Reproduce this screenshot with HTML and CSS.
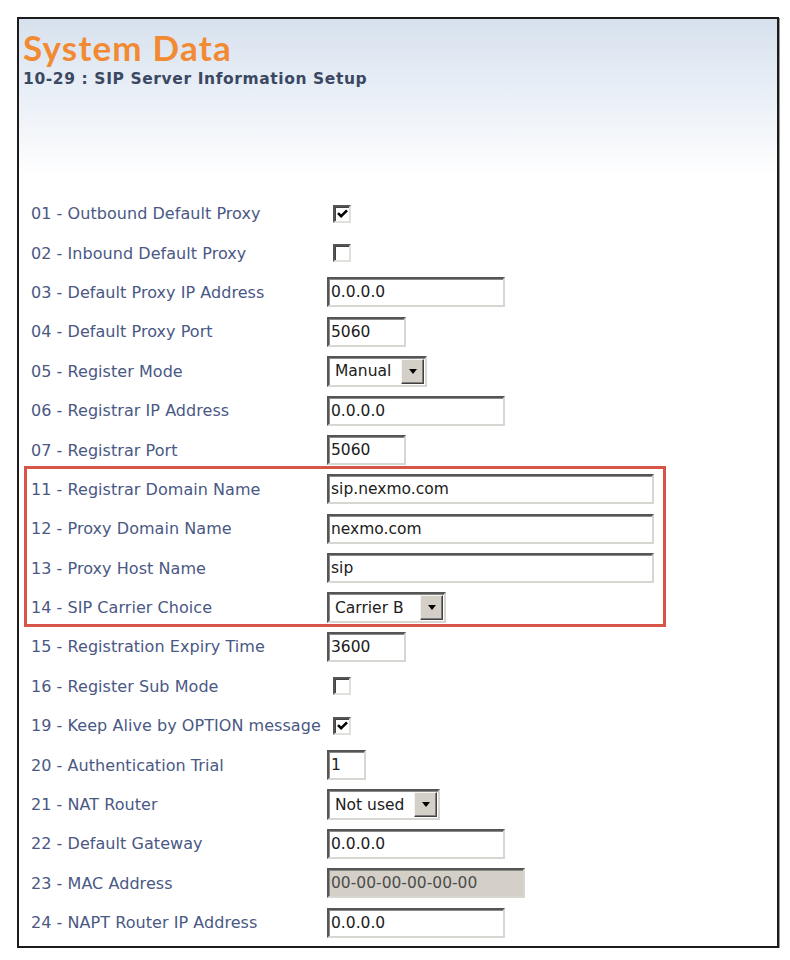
FILE: index.html
```html
<!DOCTYPE html>
<html>
<head>
<meta charset="utf-8">
<link rel="stylesheet" href="styles.css">
</head>
<body>
<div class="frame">
  <div class="header">
    <h1 class="title">System Data</h1>
    <h2 class="subtitle">10-29 : SIP Server Information Setup</h2>
  </div>
  <div class="form">
    <div class="row"><span class="label">01 - Outbound Default Proxy</span><span class="cb"><svg viewBox="0 0 12 10" class="tick"><path d="M1 4.5 L4.5 8 L11 1.5" fill="none" stroke="#000" stroke-width="2.8"/></svg></span></div>
    <div class="row"><span class="label">02 - Inbound Default Proxy</span><span class="cb"></span></div>
    <div class="row"><span class="label">03 - Default Proxy IP Address</span><span class="field w-ip">0.0.0.0</span></div>
    <div class="row"><span class="label">04 - Default Proxy Port</span><span class="field w-port">5060</span></div>
    <div class="row"><span class="label">05 - Register Mode</span><span class="select w-manual"><span class="sel-text">Manual</span><span class="sel-btn"><span class="arrow"></span></span></span></div>
    <div class="row"><span class="label">06 - Registrar IP Address</span><span class="field w-ip">0.0.0.0</span></div>
    <div class="row"><span class="label">07 - Registrar Port</span><span class="field w-port">5060</span></div>
    <div class="group">
      <div class="row"><span class="label">11 - Registrar Domain Name</span><span class="field w-domain">sip.nexmo.com</span></div>
      <div class="row"><span class="label">12 - Proxy Domain Name</span><span class="field w-domain">nexmo.com</span></div>
      <div class="row"><span class="label">13 - Proxy Host Name</span><span class="field w-domain">sip</span></div>
      <div class="row"><span class="label">14 - SIP Carrier Choice</span><span class="select w-carrier"><span class="sel-text">Carrier B</span><span class="sel-btn"><span class="arrow"></span></span></span></div>
    </div>
    <div class="row"><span class="label">15 - Registration Expiry Time</span><span class="field w-port">3600</span></div>
    <div class="row"><span class="label">16 - Register Sub Mode</span><span class="cb"></span></div>
    <div class="row"><span class="label">19 - Keep Alive by OPTION message</span><span class="cb"><svg viewBox="0 0 12 10" class="tick"><path d="M1 4.5 L4.5 8 L11 1.5" fill="none" stroke="#000" stroke-width="2.8"/></svg></span></div>
    <div class="row"><span class="label">20 - Authentication Trial</span><span class="field w-trial">1</span></div>
    <div class="row"><span class="label">21 - NAT Router</span><span class="select w-nat"><span class="sel-text">Not used</span><span class="sel-btn"><span class="arrow"></span></span></span></div>
    <div class="row"><span class="label">22 - Default Gateway</span><span class="field w-ip">0.0.0.0</span></div>
    <div class="row"><span class="label">23 - MAC Address</span><span class="field w-mac disabled">00-00-00-00-00-00</span></div>
    <div class="row"><span class="label">24 - NAPT Router IP Address</span><span class="field w-ip">0.0.0.0</span></div>
  </div>
</div>
</body>
</html>
```
FILE: styles.css
```css
html, body {
  margin: 0;
  padding: 0;
  background: #ffffff;
}
.frame {
  margin: 17px 0 0 17px;
  width: 758px;
  height: 927px;
  border: 2px solid #1c1c1c;
  box-shadow: 1px 1px 0 #9a9a9a;
  background: #ffffff;
  font-family: "DejaVu Sans", sans-serif;
}
.header {
  height: 155px;
  padding: 9px 0 0 4px;
  box-sizing: border-box;
  background: linear-gradient(to bottom, #d7e1ed 0%, #e6edf6 40%, #f6f8fb 80%, #ffffff 100%);
}
.title {
  margin: 0;
  font-family: "Lato", "DejaVu Sans", sans-serif;
  font-weight: 700;
  font-size: 35px;
  line-height: 38px;
  letter-spacing: 1.2px;
  color: #f28a34;
}
.subtitle {
  margin: 3px 0 0 0;
  font-family: "DejaVu Sans", sans-serif;
  font-weight: 700;
  font-size: 15.5px;
  line-height: 20px;
  letter-spacing: 0.6px;
  color: #3b4862;
}
.form {
  padding: 20px 0 0 12px;
}
.row {
  display: grid;
  grid-template-columns: 296px auto;
  align-items: center;
  height: 39.4px;
}
.label {
  font-size: 16px;
  letter-spacing: 0.05px;
  color: #4a5884;
  white-space: nowrap;
}
.group {
  position: relative;
}
.group::before {
  content: "";
  position: absolute;
  left: -7px;
  top: -4px;
  width: 636px;
  height: 155px;
  border: 3px solid #d65549;
  pointer-events: none;
}
.field {
  display: block;
  height: 30px;
  box-sizing: border-box;
  border-style: solid;
  border-width: 2px;
  border-color: #555555 #d8d6d0 #d8d6d0 #555555;
  box-shadow: inset 1px 1px 0 #8a8a8a;
  background: #ffffff;
  font-size: 15.5px;
  line-height: 26px;
  padding-left: 2px;
  color: #202020;
  white-space: nowrap;
  overflow: hidden;
}
.w-ip { width: 178px; }
.w-port { width: 79px; }
.w-domain { width: 327px; }
.w-trial { width: 39px; }
.w-mac { width: 198px; }
.disabled {
  background: #d4d0c8;
  color: #4d4d4d;
}
.cb {
  display: block;
  margin-left: 6px;
  width: 18px;
  height: 18px;
  box-sizing: border-box;
  border-style: solid;
  border-width: 2px;
  border-color: #555555 #e2e0da #e2e0da #555555;
  box-shadow: inset 1px 1px 0 #444444;
  background: #ffffff;
  position: relative;
}
.tick {
  position: absolute;
  left: 2px;
  top: 2px;
  width: 11px;
  height: 9px;
}
.select {
  display: flex;
  align-items: center;
  height: 31px;
  box-sizing: border-box;
  border-style: solid;
  border-width: 2px;
  border-color: #555555 #d8d6d0 #d8d6d0 #555555;
  box-shadow: inset 1px 1px 0 #8a8a8a;
  background: #ffffff;
  padding: 1px 1px 1px 6px;
}
.w-manual { width: 100px; }
.w-carrier { width: 119px; }
.w-nat { width: 113px; }
.sel-text {
  flex: 1;
  font-size: 15.5px;
  color: #202020;
  white-space: nowrap;
}
.sel-btn {
  width: 23px;
  height: 25px;
  box-sizing: border-box;
  background: #d4d0c8;
  border-style: solid;
  border-width: 1px;
  border-color: #f4f3ef #404040 #404040 #f4f3ef;
  box-shadow: inset -1px -1px 0 #808080;
  display: flex;
  align-items: center;
  justify-content: center;
}
.arrow {
  width: 0;
  height: 0;
  border-left: 4.5px solid transparent;
  border-right: 4.5px solid transparent;
  border-top: 5px solid #000000;
}
```
